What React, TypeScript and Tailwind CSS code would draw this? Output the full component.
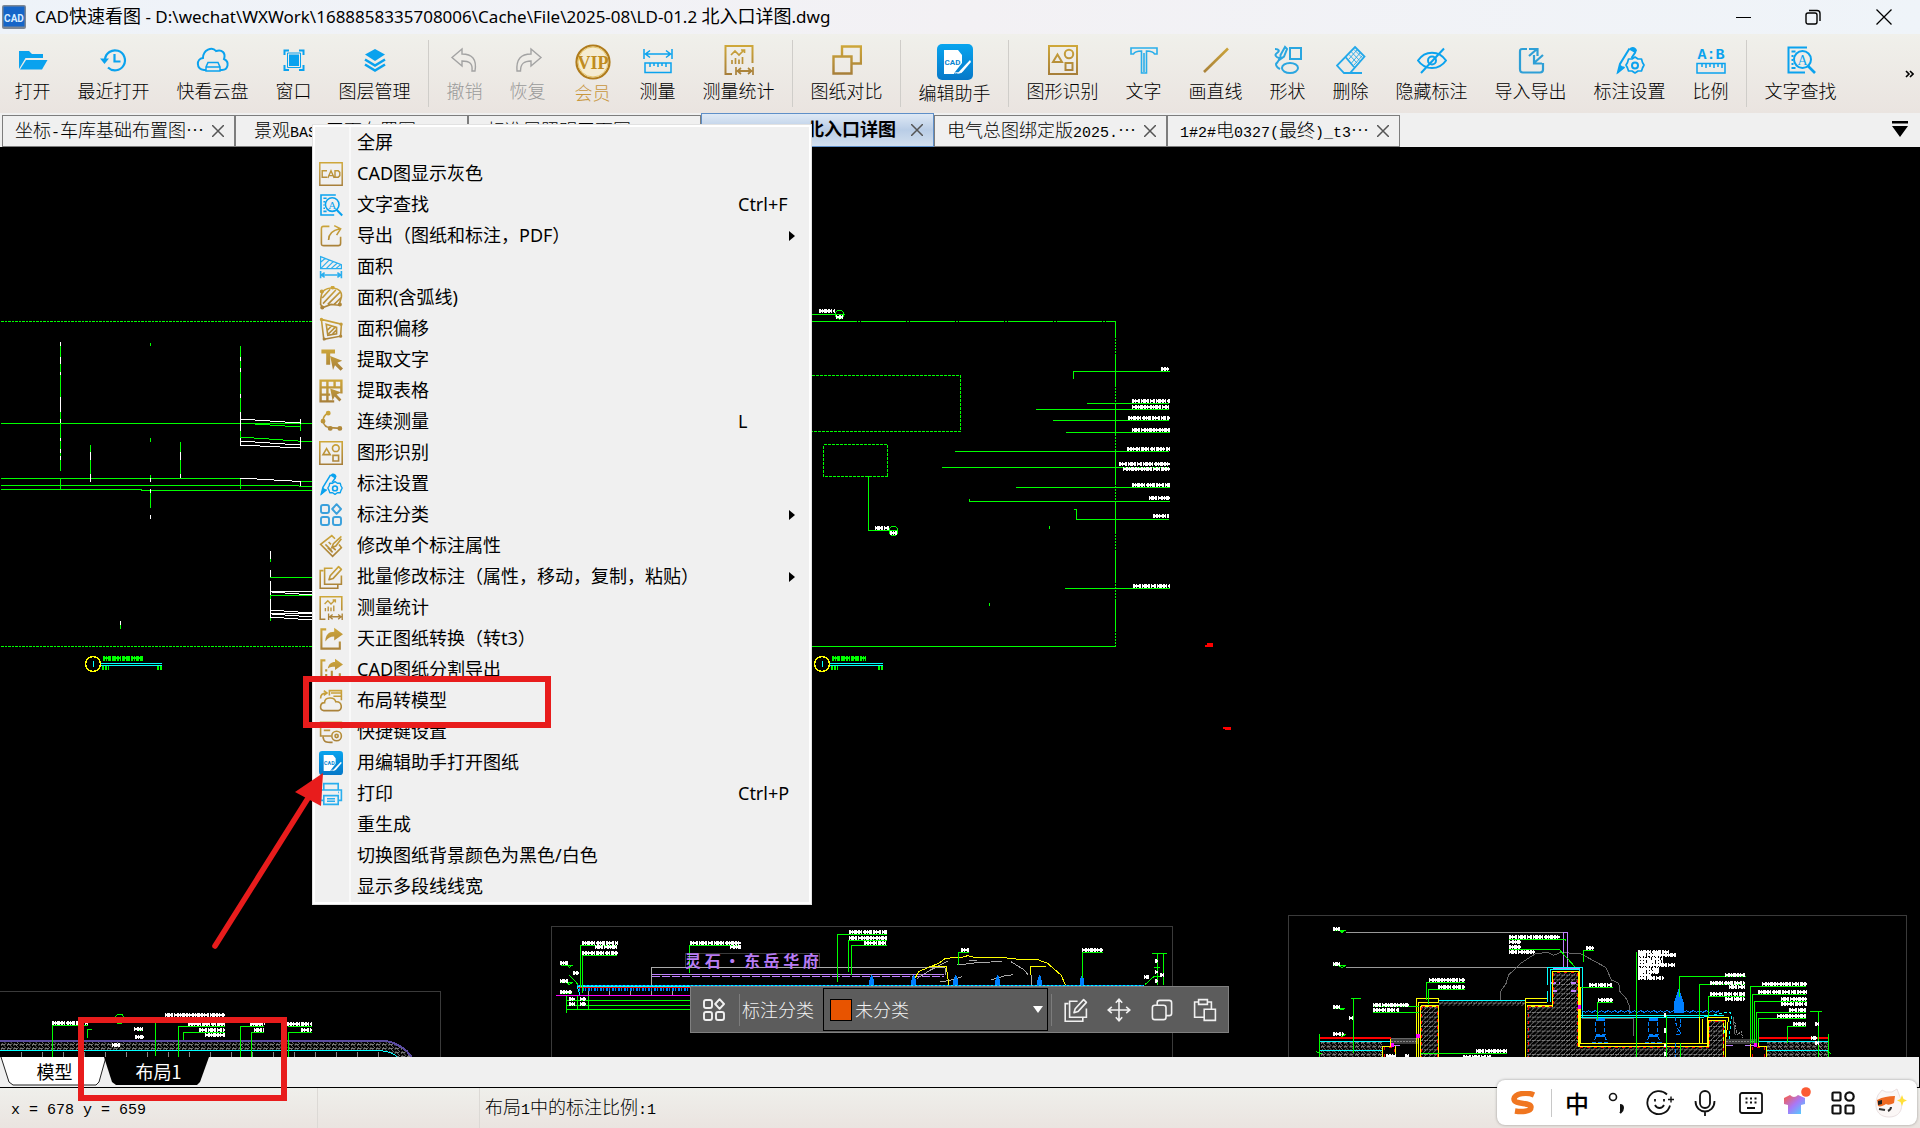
import React from "react";

const GOLD = "url(#gold)";
const BLUE = "#0aa2ee";
const GREEN = "#00ff00";

type IconProps = { size?: number; children?: React.ReactNode; color?: string; sw?: number };

function Ico({ size = 30, children, color = GOLD, sw = 2 }: IconProps) {
  return (
    <svg width={size} height={size} viewBox="0 0 30 30" fill="none" stroke={color} strokeWidth={sw} aria-hidden="true">
      {children}
    </svg>
  );
}

/* ---------- shared icons ---------- */

const FindText = ({ size }: { size?: number }) => (
  <Ico size={size} color={BLUE}>
    <path d="M21 2.500H2.500v25H19M5.500 6.500h4M5.500 11h2M5.500 15h1.500M5.500 19h2M5.500 23h4" />
    <circle cx="16.500" cy="14.500" r="8.500" />
    <path d="M22 21l7 7" strokeWidth={2.600} />
    <text x="16.500" y="19.500" textAnchor="middle" fontSize="14" fontFamily="Liberation Serif, serif" fill={BLUE} stroke="none">A</text>
  </Ico>
);
const Shapes = ({ size }: { size?: number }) => (
  <Ico size={size}>
    <path d="M1 1h28v28H1zM9.500 9.500l4.500 7.500H5z" />
    <circle cx="21" cy="9" r="4.200" />
    <path d="M17.500 18h7v7h-7z" />
  </Ico>
);
const Stats = ({ size }: { size?: number }) => (
  <Ico size={size}>
    <path d="M28.500 18V1h-27v28H8M13 26h15" />
    <path d="M7 10l4-4 4 4 5-5M17 5h3.500v3M8 19v-4M11.500 19v-6M15 19v-4.500M18.500 19v-7M12 22v8M29 22v8M17 23l-3.500 3 3.500 3M24 23l3.500 3-3.500 3" strokeWidth={1.700} />
  </Ico>
);
const PencilGear = ({ size }: { size?: number }) => (
  <Ico size={size} color={BLUE}>
    <path d="M14.500 3.500L5 19l-2 8 6.500-5M20.500 7l-4 6" />
    <path d="M14 4.500c2-4 7-3 8 1l-1.500 2.800zM4.500 19.500l5 3L2.500 29z" fill={BLUE} stroke="none" />
    <path d="M20 12l3 2h3.500l1 3.500 1.500 2.500-1.500 3-1 3H23l-3 2-3-2h-3.500l-1-3-1.500-3 1.500-2.500 1-3.500H17z" strokeWidth={1.700} strokeLinejoin="round" />
    <circle cx="20" cy="20.500" r="3" />
  </Ico>
);
const CadEdit = ({ size = 36 }: { size?: number }) => (
  <svg width={size} height={size} viewBox="0 0 36 36" aria-hidden="true">
    <rect width="36" height="36" rx="5" fill="url(#cadblue)" />
    <path d="M7 6h14l4 5v8l-7 9-1 2H7z" fill="#fff" />
    <text x="15.500" y="21" fontSize="8" fontWeight="700" textAnchor="middle" fill="#0a86d2" fontFamily="Roboto, sans-serif">CAD</text>
    <path d="M33 16l-9 9.500-4 4.500 5.500-2L34 18z" fill="#fff" />
    <path d="M18 29c3-1 4 1 7-1" stroke="#fff" fill="none" />
  </svg>
);
const Grid4 = ({ size, color = "#3aa0dc", sw = 2.400 }: { size?: number; color?: string; sw?: number }) => (
  <Ico size={size} color={color} sw={sw}>
    <rect x="2.500" y="2.500" width="10" height="10" rx="2.500" />
    <rect x="2.500" y="17.500" width="10" height="10" rx="2.500" />
    <rect x="17.500" y="17.500" width="10" height="10" rx="2.500" />
    <path d="M22 1.500l5.500 6-5.500 6-5.500-6z" strokeLinejoin="round" />
  </Ico>
);
const BatchEdit = ({ size, color }: { size?: number; color?: string }) => (
  <Ico size={size} color={color}>
    <path d="M5.500 7H1.500v22h22v-4M17 4H7v20h21V13" />
    <path d="M24.500 2l3.500 3.500L17.500 17l-5 1.500L14 13.500z" strokeLinejoin="round" />
  </Ico>
);

/* ---------- toolbar ---------- */

const icons = {
  open: (
    <Ico color="none">
      <path d="M1 24V6h10l3 3h11v4H7.500z" fill={BLUE} />
      <path d="M8 15h21.500L24 24.500H2z" fill={BLUE} />
    </Ico>
  ),
  recent: (
    <Ico color={BLUE} sw={2.200}>
      <path d="M6 14.500A10 10 0 1 1 9 22.500M15.500 9v7.500h6" />
      <path d="M1 13.500h9L5.500 19z" fill={BLUE} stroke="none" />
    </Ico>
  ),
  cloud: (
    <svg width="34" height="30" viewBox="0 0 34 30" fill="none" stroke={BLUE} strokeWidth="2" aria-hidden="true">
      <path d="M10 25H8C0 24 0 14 7 13 7 5 16 1 20 6c6-2 10 2 8 8 6 3 4 11-2 11h-2" />
      <path d="M12 17.500h10l2 4.500v4H10v-4zM10 22h14" strokeWidth="1.500" />
    </svg>
  ),
  window: (
    <Ico color={BLUE}>
      <path d="M11 10.500h8v9.500h-8z" fill={BLUE} />
      <path d="M8.500 8h13v14.500h-13z" strokeWidth={1} />
      <path d="M5.500 10V5.500H10M20 5.500h4.500V10M24.500 20v5H20M10 25H5.500v-5" />
    </Ico>
  ),
  layers: (
    <Ico color={BLUE} sw={2.600}>
      <path d="M15 4l10 5.500L15 16 5 9.500z" fill={BLUE} stroke="none" />
      <path d="M5 14.500l10 6 10-6M5 19.500l10 6 10-6" />
    </Ico>
  ),
  undo: (
    <Ico color="#a3a3a3" sw={1.400}>
      <path d="M2 12.500L12 4v5c10 0 15 5 13 17h-3c1-8-3-10-10-10v5z" />
    </Ico>
  ),
  redo: (
    <Ico color="#a3a3a3" sw={1.400}>
      <path d="M28 12.500L18 4v5C8 9 3 14 4 26h3.500c0-8 4-10 10.500-10v5z" />
    </Ico>
  ),
  vip: (
    <svg width="36" height="36" viewBox="0 0 36 36" aria-hidden="true">
      <circle cx="18" cy="18" r="16.500" fill="#f5ecd2" stroke="#b07c1c" strokeWidth="2.200" />
      <circle cx="18" cy="18" r="15" fill="none" stroke="#e6c56a" strokeWidth="1" />
      <text x="18" y="24.500" textAnchor="middle" fontSize="18" fontWeight="700" fontFamily="Liberation Serif, serif" fill="#c08c20">VIP</text>
    </svg>
  ),
  measure: (
    <Ico color={BLUE} sw={1.500}>
      <path d="M1 4v10M29 4v10M2 9h26M7 5.500L2.500 9 7 12.500M23 5.500L27.500 9 23 12.500M2 18h26v9.500H2zM7 18v4M11 18v3M15 18v4M19 18v3M23 18v4" />
    </Ico>
  ),
  stats: <Stats />,
  compare: (
    <Ico sw={2.400}>
      <path d="M10 11V1.500h19v17h-9M1.500 11.500h18v17h-18z" />
    </Ico>
  ),
  edit: <CadEdit />,
  shapesId: <Shapes />,
  text: (
    <Ico color="#2aaeea">
      <path d="M2 3h26v6h-2.500c-1-2.500-3-3-8-3v22h-5V6c-5 0-7 .5-8 3H2zM15 8v19" strokeWidth={1.600} />
    </Ico>
  ),
  line: (
    <Ico sw={2.600}>
      <path d="M3 27L27 3.500" />
    </Ico>
  ),
  shape: (
    <Ico color="#2aa6e0">
      <path d="M17 3h11v11H17z" />
      <ellipse cx="17" cy="23" rx="8" ry="5" />
      <path d="M12 2L7.500 10v4l3.500-2.500L14 4zM2 4c4 0 5 2 2 4-3 2-1 4 2 5 1 3-2 4-3 6 0 3 2 4 4 5" />
    </Ico>
  ),
  erase: (
    <Ico color="#22a8ea" sw={1.800}>
      <path d="M19 2l9.500 9.500L14 28H8l-7-7.500zM9.500 12L18 22M8 28h18" />
      <path d="M13 9.500l8 8.500M15.500 7l8 8.500M18 4.500l8 8M21 5l-8.500 9.500M24 8l-8.500 10M26 11l-8 9" strokeWidth={0.900} />
    </Ico>
  ),
  hide: (
    <Ico color={BLUE}>
      <path d="M1 15.500C8 5 22 5 29 15.500 22 25.500 8 25.500 1 15.500zM27 3.500L4 28" />
      <circle cx="15" cy="15.500" r="4" />
    </Ico>
  ),
  io: (
    <Ico color="#2e9fd6" sw={2.200}>
      <path d="M11 4H6.500C4 4 4 5 4 7v17c0 3 1 3.500 3 3.500h17c2 0 3-1 3-3V18M13 11l8-7M13 4h8.500v7M27 10l-9 8M18 10v8.500h8" />
    </Ico>
  ),
  markSet: <PencilGear />,
  ratio: (
    <Ico color={BLUE} sw={1.500}>
      <text x="15" y="13.500" textAnchor="middle" fontSize="15" fontWeight="700" fontFamily="Liberation Mono, monospace" fill={BLUE} stroke="none">A:B</text>
      <path d="M1 18.500h28V28H1zM6 19v3M10 19v4M14 19v3M18 19v4M22 19v3M26 19v4" />
    </Ico>
  ),
  find: <FindText />,
};

type Tool = { label: string; icon: React.ReactNode; w: string; tone?: string; big?: boolean };
const W2 = "w-[63px]";
const W3 = "w-[81px]";
const W4 = "w-[99px]";
const tools: (Tool | null)[] = [
  { label: "打开", icon: icons.open, w: W2 },
  { label: "最近打开", icon: icons.recent, w: W4 },
  { label: "快看云盘", icon: icons.cloud, w: W4 },
  { label: "窗口", icon: icons.window, w: W2 },
  { label: "图层管理", icon: icons.layers, w: W4 },
  null,
  { label: "撤销", icon: icons.undo, w: W2, tone: "text-[#9a9a9a]" },
  { label: "恢复", icon: icons.redo, w: W2, tone: "text-[#9a9a9a]" },
  { label: "会员", icon: icons.vip, w: "w-[67px]", tone: "text-[#c8963c]", big: true },
  { label: "测量", icon: icons.measure, w: W2 },
  { label: "测量统计", icon: icons.stats, w: W4 },
  null,
  { label: "图纸对比", icon: icons.compare, w: W4 },
  null,
  { label: "编辑助手", icon: icons.edit, w: W4, big: true },
  null,
  { label: "图形识别", icon: icons.shapesId, w: W4 },
  { label: "文字", icon: icons.text, w: W2 },
  { label: "画直线", icon: icons.line, w: W3 },
  { label: "形状", icon: icons.shape, w: W2 },
  { label: "删除", icon: icons.erase, w: W2 },
  { label: "隐藏标注", icon: icons.hide, w: W4 },
  { label: "导入导出", icon: icons.io, w: W4 },
  { label: "标注设置", icon: icons.markSet, w: W4 },
  { label: "比例", icon: icons.ratio, w: W2 },
  null,
  { label: "文字查找", icon: icons.find, w: W4 },
];

function Toolbar() {
  return (
    <div className="flex h-[79px] shrink-0 items-stretch bg-linear-to-b from-[#f0f0eb] to-[#eae4e0] pl-px font-light">
      {tools.map((t, i) =>
        t ? (
          <button key={i} className={`flex shrink-0 flex-col items-center text-lg leading-6 ${t.w} ${t.tone ?? "text-black"} ${t.big ? "pt-2.5" : "gap-[3px] pt-[11px]"}`}>
            {t.icon}
            <span className="whitespace-nowrap">{t.label}</span>
          </button>
        ) : (
          <div key={i} className="my-1.5 flex w-[9px] shrink-0 justify-center">
            <div className="w-px bg-[#cfcdc9]" />
          </div>
        )
      )}
      <button className="ml-auto self-center pr-1.5" aria-label="更多">
        <svg width="9" height="8" viewBox="0 0 9 8" fill="none" stroke="#000" strokeWidth="1.600" aria-hidden="true">
          <path d="M1 1l3 3-3 3M5 1l3 3-3 3" />
        </svg>
      </button>
    </div>
  );
}

/* ---------- document tabs ---------- */

const M = ({ children }: { children: React.ReactNode }) => <span className="font-['Liberation_Mono',monospace] text-[15px] font-normal">{children}</span>;

const docs: { key: string; text: React.ReactNode; active?: boolean; pad?: string }[] = [
  { key: "a", text: <>坐标<M>-</M>车库基础布置图…</> },
  { key: "b", text: <>景观<M>BASE</M>平面布置图…</>, pad: "pl-[18px]" },
  { key: "c", text: <>标准层照明平面图<M>(1)</M></>, pad: "pl-[18px]" },
  { key: "d", text: <><M>LD-01.2</M> 北入口详图</>, active: true },
  { key: "e", text: <>电气总图绑定版<M>2025.</M>…</> },
  { key: "f", text: <><M>1#2#</M>电<M>0327(</M>最终<M>)_t3</M>…</> },
];

function DocTabs() {
  return (
    <div className="flex h-[34px] shrink-0 items-end bg-[#f0f0f0] pl-0.5">
      {docs.map((d) => (
        <div
          key={d.key}
          className={
            d.active
              ? "flex h-[34px] w-[233px] items-center border border-[#5f8fc8] bg-linear-to-b from-[#dfe9f5] via-[#b9cde6] to-[#d3e0ef] pr-2.5"
              : "flex h-8 w-[233px] items-center border border-[#7d7d7d] bg-[#f0f0f0] pr-2.5"
          }
        >
          <button className={`min-w-0 flex-1 overflow-hidden text-lg leading-7 whitespace-nowrap text-black ${d.active ? "pr-[15px] text-right font-bold" : "text-left font-light"} ${d.pad ?? "pl-3"}`}>
            {d.text}
          </button>
          <button aria-label="关闭">
            <svg width="12" height="12" viewBox="0 0 12 12" stroke="#555" strokeWidth="1.500" aria-hidden="true">
              <path d="M0 0l12 12M12 0L0 12" />
            </svg>
          </button>
        </div>
      ))}
      <button className="mr-3 mb-[10px] ml-auto" aria-label="标签列表">
        <svg width="16" height="16" viewBox="0 0 16 16" aria-hidden="true">
          <path d="M0 0h16v2.500H0zM0 5h16l-8 11z" />
        </svg>
      </button>
    </div>
  );
}

/* ---------- context menu ---------- */

const menuItems: { label: string; icon?: React.ReactNode; key?: string; sub?: boolean }[] = [
  { label: "全屏" },
  {
    label: "CAD图显示灰色",
    icon: (
      <Ico size={24}>
        <path d="M1 1h28v28H1zM10 11H4v8h6M11 20l4-9 4 9M12.500 17h5M20 11h4l2 2v4l-2 2h-4z" strokeWidth={1.800} />
      </Ico>
    ),
  },
  { label: "文字查找", key: "Ctrl+F", icon: <FindText size={24} /> },
  {
    label: "导出（图纸和标注，PDF）",
    sub: true,
    icon: (
      <Ico size={24}>
        <path d="M13 3H6C3 3 3 4 3 7v17c0 3 1 3 3 3h18c2 0 3-1 3-3v-8M12 20c0-7 4-12 14-14M19 2l8 4-5 8" />
      </Ico>
    ),
  },
  {
    label: "面积",
    icon: (
      <Ico size={24} color="#2aaeee" sw={1.500}>
        <path d="M2 2l26 10v5H2zM2 9l6-5M3 16l10-10M9 17l9-9M15 17l8-7M21 17l6-5" />
        <path d="M2 20v9M28 20v9M3 25h24M7 22l-4 3 4 3M23 22l4 3-4 3" strokeWidth={2} />
      </Ico>
    ),
  },
  {
    label: "面积(含弧线)",
    icon: (
      <Ico size={24}>
        <path d="M4 8c6-8 26-8 24 6l-3 10-10-1-10 4-3-4c0-8 0-10 2-15zM4 15L14 4M5 22L21 5M11 23L26 8M19 23l9-9" />
        <path d="M4 27h.1M3.500 7h.1M17 2h.1M26 23h.1" strokeWidth={5} strokeLinecap="round" />
      </Ico>
    ),
  },
  {
    label: "面积偏移",
    icon: (
      <Ico size={24}>
        <path d="M3 3l25 6-1 15-21 4zM9 9l13 4v8l-11 2zM10 17l6-6M12 21l9-9M17 21l5-5" />
        <path d="M3 3h.1M27.500 9h.1M27 24h.1M6.500 27.500h.1" strokeWidth={4} strokeLinecap="round" />
      </Ico>
    ),
  },
  {
    label: "提取文字",
    icon: (
      <Ico size={24} color="none">
        <path d="M3 2h17v5h-6v14H9V7H3zM14 10l15 6-6 2.500 7 7-3 3-7-7-2.500 6z" fill={GOLD} />
      </Ico>
    ),
  },
  {
    label: "提取表格",
    icon: (
      <Ico size={24} sw={3}>
        <path d="M28 18V2H2v26h17M2 10.500h26M2 19.500h12M10.500 2v26M19.500 2v9" />
        <path d="M14 12l14 5-6 2.500 6 6-2.500 2.500-6-6-2.500 5z" fill={GOLD} stroke="none" />
      </Ico>
    ),
  },
  {
    label: "连续测量",
    key: "L",
    icon: (
      <Ico size={24}>
        <path d="M11 4c-4 2-6 5-6 10 1 5 4 8 9 8l13 1" />
        <path d="M11.500 4h.1M5 14h.1M14 23h.1M26 23h.1" strokeWidth={6} strokeLinecap="round" />
      </Ico>
    ),
  },
  { label: "图形识别", icon: <Shapes size={24} /> },
  { label: "标注设置", icon: <PencilGear size={24} /> },
  { label: "标注分类", sub: true, icon: <Grid4 size={24} /> },
  {
    label: "修改单个标注属性",
    icon: (
      <Ico size={24}>
        <path d="M20 6l-4-4L2 13l15 15 11-11-3-4M8 13l8 8M12 10l3 3M11 17l6 6M28 3L18 12l-2 5 5-2 7-9M17 17l4 3" />
      </Ico>
    ),
  },
  { label: "批量修改标注（属性，移动，复制，粘贴）", sub: true, icon: <BatchEdit size={24} /> },
  { label: "测量统计", icon: <Stats size={24} /> },
  {
    label: "天正图纸转换（转t3）",
    icon: (
      <Ico size={24} sw={2.600}>
        <path d="M9 3H3v24h23v-9" />
        <path d="M8 18c0-8 4-12 11-12V1l11 8-11 8v-5c-5 0-8 2-11 6z" fill={GOLD} stroke="none" />
      </Ico>
    ),
  },
  {
    label: "CAD图纸分割导出",
    icon: (
      <Ico size={24} sw={2.600}>
        <path d="M8 3H3v25h6M13 28h3M20 28h3M26 28v-9M9 14v3M9 20v4M16 16v8" />
        <path d="M11 13c1-5 4-8 9-8V1l10 7-10 7v-4c-4 0-6 0-9 2z" fill={GOLD} stroke="none" />
      </Ico>
    ),
  },
  {
    label: "布局转模型",
    icon: (
      <Ico size={24}>
        <path d="M6 27C0 26 1 17 7 17c0-7 12-8 14-1 8-1 9 10 3 11zM2 12c0-5 3-7 7-7M6 2l4 3-4 3M13 8V2h15v12M15 5h12M18 9h10" />
      </Ico>
    ),
  },
  {
    label: "快捷键设置",
    icon: (
      <Ico size={24}>
        <path d="M15 20H2V3h26v8M6 8h3M12 8h3M18 8h3M24 8h2M6 13h8M5 21c1 7 4 7 12 7" />
        <circle cx="22" cy="20" r="6" />
        <circle cx="22" cy="20" r="2" />
      </Ico>
    ),
  },
  { label: "用编辑助手打开图纸", icon: <CadEdit size={24} /> },
  {
    label: "打印",
    key: "Ctrl+P",
    icon: (
      <Ico size={24} color="#2aaeee">
        <path d="M6 10V2h18v8M6 23H2V10h26v13h-4M6 17h18v11H6zM10 21h10M10 24h10M24 13h1" />
      </Ico>
    ),
  },
  { label: "重生成" },
  { label: "切换图纸背景颜色为黑色/白色" },
  { label: "显示多段线线宽" },
];

function ContextMenu() {
  return (
    <div className="absolute top-[124px] left-[312px] w-[500px] border border-[#e2e2e2] bg-white p-0.5 font-['Noto_Sans','Noto_Sans_CJK_SC',sans-serif]">
      <ul role="menu" className="bg-[#f0f0f0]">
        {menuItems.map((m) => (
          <li key={m.label} role="none">
            <button role="menuitem" className="flex h-[31px] w-full items-center text-left text-lg leading-[31px] text-black">
              <span className="flex h-full w-9 shrink-0 items-center justify-center border-r-2 border-[#f9f9f9] pr-0.5">{m.icon}</span>
              <span className="flex-1 pl-1.5 whitespace-nowrap">{m.label}</span>
              {m.key && <span className="w-[71px]">{m.key}</span>}
              {m.sub && (
                <svg className="mr-3.5" width="6" height="10" viewBox="0 0 6 10" aria-hidden="true">
                  <path d="M0 0l6 5-6 5z" />
                </svg>
              )}
            </button>
          </li>
        ))}
      </ul>
    </div>
  );
}

/* ---------- drawing ---------- */

/** Annotation text too small to read at this zoom level. */
function Tiny({ at, c = "#fff" }: { at: number[][]; c?: string }) {
  return (
    <>
      {at.map(([x, y, w], i) => (
        <g key={i} stroke={c}>
          <path d={`M${x} ${y}h${w}`} strokeWidth={4} strokeDasharray="2 1 1 1 3 1 2 1 1 2" strokeDashoffset={i * 3} />
          <path d={`M${x} ${y}h${w}`} strokeWidth={2} strokeDasharray="7 1 5 1 9 2" strokeDashoffset={i * 5} />
        </g>
      ))}
    </>
  );
}

function Fountain({ x, y }: { x: number; y: number }) {
  return <path d={`M${x} ${y}v-14l3-12 2-6 3 6 2 12v14z`} fill="#0080ff" stroke="none" />;
}

function TitleMark({ x, n, w }: { x: number; n: number; w: number }) {
  return (
    <g>
      <circle cx={x} cy={664} r={7.500} stroke="#ffff00" strokeWidth={1.500} />
      <path d={`M${x} 661v6`} stroke="#00ffff" />
      <path d={`M${x + 8} 663.500h${w}M${x + 8} 665.500h${w}`} stroke="#00ffff" />
      <g stroke={GREEN}>
        <path d={`M${x + 10} 658h${n}`} strokeWidth={5} strokeDasharray="2 1 1 1 3 1 4 1" />
        <path d={`M${x + 10} 658h${n}`} strokeWidth={2} strokeDasharray="7 2 9 1" />
        <path d={`M${x + 9} 668h7M${x + 3 + w} 668h5`} strokeWidth={4} strokeDasharray="2 1" />
      </g>
    </g>
  );
}

function Drawing() {
  return (
    <svg className="absolute inset-0 h-full w-full" viewBox="0 147 1920 910" preserveAspectRatio="xMinYMin slice" fill="none" strokeWidth={1} shapeRendering="crispEdges" aria-label="图纸">
      <defs>
        <pattern id="hatch" width="12" height="14" patternUnits="userSpaceOnUse">
          <path d="M0 14L12 0M5 3l5-4M-2 6l4-6" stroke="#7c7c7c" strokeWidth="2.200" />
          <path d="M2 10h2M9 11h3" stroke="#666" strokeWidth="2" />
        </pattern>
        <pattern id="gravel" width="14" height="12" patternUnits="userSpaceOnUse">
          <path d="M0 3h4l3 4h4l3-4M3 12V8l4-1M10 0v4M7 12l4-4" stroke="#7a7a7a" strokeWidth="2" />
        </pattern>
      </defs>

      <g stroke={GREEN}>
        <path d="M1 321.500h311M1 646.500h311" strokeDasharray="3 1 2 1" />
        <path d="M60.500 342v129M150.500 343v3M150.500 438v4M1 423.500h311M240.500 346v99M255 424l45 3M300.500 419v12M240 437l72 5M90.500 445v37M180.500 442v36M1 478.500h239M300 481.500h12M1 485.500h284l27 1M1 489.500h140v1h171M60.500 478v11M240.500 478v11M150.500 475v6M150.500 489v19M270.500 551v11M270.500 570v7M270.500 581v40M270 577.500h42M270 595.500h42M120.500 621v8" />
      </g>
      <g stroke="#fff">
        <path d="M60.500 342v4M60.500 357v7M60.500 372v3M60.500 397v15M60.500 419v4M60.500 438v3M60.500 449v4M60.500 456v4M240.500 357v4M240.500 368v4M240.500 394v4M240.500 412v19M240.500 438v7M240 419l60 4M240 441l60 4M240 445l60 3M300.500 419v5M300.500 437v12M90.500 452v8M90.500 474v8M180.500 452v8M180.500 474v4M150.500 478v4M150.500 489v4M150.500 515v4M240 478l60 3.500v4M270.500 551v8M270.500 570v7M270.500 581v14M270.500 599v19M270 591.500h42M272 592l40 3M270 610l42 3M270 613.500h42M272 614l40 3M270 617l42 3M120.500 621v4" />
      </g>
      <TitleMark x={93} n={40} w={61} />
      <TitleMark x={822} n={34} w={53} />

      <g stroke={GREEN}>
        <path d="M812 314.500h33M812 646.500h304M868.500 476v54.500h29M1073.500 379v-7.500h96M1087 403.500h82M1036 409.500h133M1053 420.500h116M1066 432.500h104M955 451.500h214M942 467.500h227M1016 487.500h154M969.500 499v2.500h200M1074 509.500h2v10h93M1065 588.500h105M1049.500 526v3M989.500 603v3" />
        <path d="M812 321.500h303" strokeDasharray="45 1 2 1" />
        <path d="M1115.500 321v325" strokeDasharray="17 1 2 1 2 1 2 1 2 1 2 1 16 0" />
        <path d="M812 375.500h148.500v56H812M823.500 444.500h64v32h-64z" strokeDasharray="3 1" />
        <circle cx="839.500" cy="314.500" r="4.500" />
        <circle cx="893.500" cy="531" r="4.500" />
      </g>
      <Tiny
        at={[
          [819, 311, 16], [875, 528, 14], [1161, 369, 8], [1132, 401, 38], [1132, 407, 38], [1128, 418, 42], [1132, 430, 38],
          [1127, 449, 43], [1119, 464, 51], [1123, 469, 47], [1132, 485, 38], [1149, 498, 21], [1153, 516, 16], [1133, 586, 37], [836, 317, 7], [890, 533, 7],
        ]}
      />
      <path d="M1205 646h8M1207 644h6M1223 728h8M1225 729h6" stroke="#f00" strokeWidth="2" />

      {/* lower-left sheet */}
      <g transform="translate(0 970) scale(.4464 .3333)" className="[&_path]:[vector-effect:non-scaling-stroke]">
        <path d="M0 64h987v200" stroke="#3a3a3a" />
        <path d="M0 215h862l32 10 28 35h-34l-20-18H0z" fill="url(#gravel)" />
        <path d="M0 212h862q40 10 60 48" stroke="#5a4ba0" strokeWidth={2} />
        <path d="M0 241h850q30 5 40 20" stroke="#00ffff" />
        <path d="M48 245v15M95 245v15M142 245v15M189 245v15M236 245v15M283 245v15M330 245v15M377 245v15M424 245v15M471 245v15M518 245v15M565 245v15M612 245v15M659 245v15M706 245v15M753 245v15M800 245v15M847 245v15" stroke="#888" />
        <path d="M117 260V166h80M195 205v-27h10M348 258V142h157M400 260v-91h105M411 210v-23h94M539 260v-91h53M563 260v-73h29M646 260v-73h52M646 169h52M258 141l5-8h10l5 8-5 8h-10zM263 160h10M312 182h6M313 205h6" stroke={GREEN} />
        <Tiny at={[[117, 160, 80], [370, 135, 135], [422, 163, 83], [446, 180, 59], [460, 194, 45], [560, 162, 34], [570, 181, 22], [642, 162, 56], [674, 181, 24], [300, 176, 20], [302, 200, 20], [252, 224, 20]]} />
      </g>

      {/* centre sheet */}
      <g transform="translate(540 910) scale(.4464 .3333)" className="[&_path]:[vector-effect:non-scaling-stroke]">
        <path d="M25 442V49h1393v393M325 172v-42h300v42" stroke="#3a3a3a" />
        <path d="M250 226v-53h658M250 193h650M908 173v22M108 230v26M155 230v26M202 230v26M249 230v26M296 230v26M845 205l30-25 40-28M896 215l20-3 30-12M1010 210l30-12 20-4M960 152l20-2M1055 155l30 25 8 14M1101 195v30M935 165l50-8 50-2" stroke="#aaa" />
        <path d="M250 195h656M250 199h656" stroke="#c080ff" strokeDasharray="8 2" />
        <path d="M840 205l8-20 24-14 20-10 16-16 40-4 10-4 15 5h60l40 6h40l24 12 30 35 10 30M872 170h38l6 56M1099 195v-26h34" stroke="#ffff00" />
        <path d="M84 228h1270" stroke="#00ffff" strokeWidth={2} />
        <path d="M84 226h1270" stroke="#0080ff" strokeDasharray="2 2" />
        <path d="M84 232h252" stroke="#ff0000" />
        <path d="M88 238h248" stroke="#0080ff" strokeWidth={3} strokeDasharray="1 2 2 1" />
        <path d="M36 256h300" stroke="#ff00ff" strokeWidth={1} />
        <path d="M84 232l5 22" stroke="#00ffff" />
        {[738, 832, 926, 1020, 1114, 1209].map((x) => (
          <Fountain key={x} x={x} y={226} />
        ))}
        <path d="M91 230V106h82M95 250V136h78M335 190v-84h116M667 215V73h110M691 186V91h86M698 196v-90h79M938 165v-38h24M1215 205v-78h46M60 258v50M60 271h276M60 286h276M60 298h276M84 258v40M108 258v40M48 166h24l-6 6-6-6M48 218h24l-6 6-6-6M48 250h24M65 195l20 28M1370 130h34M1383 130v96M1397 130v96M1375 173h14M1375 200h14M1355 224l20-24" stroke={GREEN} />
        <Tiny at={[[94, 99, 80], [124, 112, 48], [94, 130, 80], [337, 100, 114], [426, 112, 25], [692, 67, 85], [692, 85, 85], [725, 100, 52], [944, 120, 18], [1215, 120, 46], [45, 160, 18], [45, 213, 18], [45, 245, 26], [66, 268, 12], [90, 268, 12], [66, 281, 12], [90, 281, 12], [75, 190, 12], [1378, 152, 6], [1378, 185, 6], [1390, 194, 8], [1353, 200, 12], [1378, 214, 6]]} />
      </g>
      <text x="685" y="966.500" fontSize="16" fontWeight="700" fontFamily="Noto Sans CJK SC, sans-serif" fill="#b87cf4">灵 石 · 东 岳 华 府</text>

      {/* right-hand sheet */}
      <g transform="translate(1280 900) scale(.4082 .3333)" className="[&_path]:[vector-effect:non-scaling-stroke]">
        <path d="M20 480V46h1515v440" stroke="#3a3a3a" />
        <path d="M345 320h42v152h-42zM606 320h62V218h64v222h320V364h36v108H606z" fill="url(#hatch)" />
        <path d="M390 303h212v16H390z" fill="url(#hatch)" />
        <path d="M98 426h152v24H98zM98 454h152v18H98zM1192 426h152v24h-152zM1192 454h152v18h-152z" fill="url(#gravel)" />
        <path d="M272 416h66v16h-66zM1092 416h76v16h-76z" fill="#3c3c3c" />
        <path d="M162 97h536M162 202h500" stroke="#999" />
        <path d="M540 300v-25l14-25 6-25 30-35 22-18 16-12 30-2 12 8 18-9 50 5 30 20 30 20 14 38 18 10 3 25 16 22 8 25v20M270 415h70M1110 350l5 55M740 355h125v52" stroke="#666" />
        <path d="M272 424h66M1092 424h76M1114 365l6 40 10-10 4 20" stroke="#888" strokeDasharray="2 1" />
        <path d="M694 202V97h11v105M668 205h66M275 438h20M1090 438h20M1140 438h20" stroke="#c080ff" />
        <path d="M664 249h22M712 249h22M666 274h18M714 274h18M668 208h64" stroke="#c080ff" strokeWidth={2} strokeDasharray="5 3" />
        <path d="M388 301h212M656 306v-34M656 254v-52h84v150M662 306v-98h72v140M738 347h350M738 352h300M97 424h172M97 451h152M1172 424h172M1192 451h152" stroke="#00ffff" />
        <path d="M1040 350l62-14 4 10-6 70M1092 360l-6 60" stroke="#00ffff" strokeDasharray="3 2" />
        <path d="M345 318h43v153M345 318v153M340 471V306M334 471V296h54v12h-48M601 471V296h54M606 318h62V214h64v226h316v-78h44v108M601 308h54M602 318v153M735 262v168h312v-78h52l-6 60M1034 430v-72M1028 352v78M251 471v-32h20v-22M283 471v-32M1191 471v-32h-20v-22M1153 471v-38" stroke="#ffff00" strokeWidth={1} />
        <path d="M345 318h43v153M606 318h62V214h64v226h316v-78h38v108" stroke="#ffff00" strokeWidth={1.500} />
        <path d="M347 321h39v150M347 321v150M608 321v150M608 321h62V218h60v225h322v-79h34v106M255 471v-28h26v28M1187 471v-28h-30v28" stroke="#f00" strokeDasharray="3 4" />
        <path d="M97 414h174M1170 414h174" stroke="#f00" strokeWidth={2} />
        <path d="M334 407h8M730 321h8M272 435h8M1160 435h8" stroke="#ff00ff" strokeWidth={4} />
        <path d="M740 332l8 5 8-5 8 5 8-5 8 5 8-5 8 5 8-5 8 5 8-5 8 5 8-5 8 5 8-5 8 5 8-5 8 5 8-5 8 5 8-5 8 5 8-5 8 5 8-5 8 5 8-5 8 5 8-5 8 5 8-5 8 5 8-5 8 5 8-5 8 5 8-5 8 5 8-5 8 5 8-5 8 5 8-5" stroke="#0080ff" />
        <path d="M773 365v34M796 365v34M773 403h24v12l6 12h-36l6-12zM903 365v34M926 365v34M903 403h24v12l6 12h-36l6-12zM970 350v20l6 20-4 15h10l-4-15 4-20v-20M968 430v40M980 430v40" stroke="#0080ff" strokeDasharray="4 2" />
        <path d="M773 354h24v10h-24zM903 354h24v10h-24zM773 404h24v8h-24zM903 404h24v8h-24zM965 338v-30l6-22 6-20 6 20 6 22v30z" fill="#0080ff" />
        <path d="M130 92h28l-6 5-6-5M130 198h28l-6 5-6-5M130 325h28l-6 5-6-5M130 405h28l-6 5-6-5M359 300v-53h94M364 312v-44h88M229 320h111M229 337h111M180 458V295M174 295h24M560 118h140v6M560 148h124l38 52M770 151h-26v34M738 262h78M778 360v-53h38M874 470V156M947 348v122M979 290v-60h162M1028 350v-97h112M1050 350v-61h90M1153 430V259h136M1158 430V283h130M1163 430V304h127M1167 430v-92h122M1171 430v-75h118M1243 428v-49h46M1298 334h30M1320 334v136M97 402v68M1344 402v68M345 460h211M88 455l14 6M1340 455l10 6M980 430v40" stroke={GREEN} />
        <Tiny
          at={[
            [130, 86, 18], [130, 192, 18], [130, 322, 18], [130, 401, 26], [365, 240, 88], [387, 262, 66], [229, 314, 86], [229, 331, 62], [560, 112, 126], [560, 125, 30], [560, 141, 30], [560, 155, 64],
            [750, 144, 20], [756, 256, 60], [780, 301, 36], [878, 156, 76], [878, 166, 92], [878, 176, 60], [878, 186, 60], [878, 196, 92], [878, 206, 50], [878, 216, 50], [878, 226, 30], [878, 235, 62],
            [1090, 224, 48], [1054, 248, 86], [1100, 261, 40], [1054, 283, 86], [1090, 297, 50], [1180, 252, 110], [1172, 276, 118], [1228, 298, 62], [1228, 311, 62], [1246, 331, 42], [1218, 349, 72], [1256, 373, 32],
            [480, 453, 76], [260, 467, 24], [306, 467, 10], [170, 354, 10], [1310, 373, 10], [1300, 415, 16], [1310, 428, 10], [448, 470, 70],
          ]}
        />
        <path d="M943 340v10M944 384v14M944 432v10M944 455v14" stroke="#fff" strokeWidth={2} />
      </g>
    </svg>
  );
}

/* ---------- floating annotation bar ---------- */

function AnnotationBar() {
  return (
    <div className="absolute top-[839px] left-[690px] flex h-[47px] w-[539px] items-center border border-[#808080] bg-[#5c5c5c] text-lg leading-6 font-light text-[#f2f2f2]">
      <button className="flex w-[46px] justify-center" aria-label="分类">
        <Grid4 size={24} color="#f0f0f0" />
      </button>
      <div className="mx-0.5 h-8 w-px bg-[#7c7c7c]" />
      <label htmlFor="category" className="w-[81px] pb-px whitespace-nowrap">标注分类</label>
      <div className="flex h-[43px] w-[225px] items-center border border-black pr-1 pl-1.5">
        <span className="size-[22px] shrink-0 border border-black bg-[#e85400]" />
        <select id="category" className="h-full min-w-0 flex-1 appearance-none bg-transparent pb-px pl-[3px]">
          <option>未分类</option>
        </select>
        <svg width="10" height="7" viewBox="0 0 10 7" aria-hidden="true">
          <path d="M0 0h10L5 7z" fill="#fff" />
        </svg>
      </div>
      <div className="mr-0.5 ml-[3px] h-8 w-px bg-[#7c7c7c]" />
      <button className="flex w-[43px] justify-center" aria-label="编辑"><BatchEdit size={24} color="#f0f0f0" /></button>
      <button className="flex w-[43px] justify-center" aria-label="移动">
        <Ico size={24} color="#f0f0f0">
          <path d="M15 2v26M2 15h26M11 6l4-4.500L19 6M11 24l4 4.500 4-4.500M6 11l-4.500 4L6 19M24 11l4.500 4-4.500 4" />
        </Ico>
      </button>
      <button className="flex w-[43px] justify-center" aria-label="复制">
        <Ico size={24} color="#f0f0f0">
          <rect x="3" y="9" width="17" height="18" rx="3" />
          <path d="M9 9V6q0-3 3-3h12q3 0 3 3v13q0 3-3 3h-4" />
        </Ico>
      </button>
      <button className="flex w-[43px] justify-center" aria-label="粘贴">
        <Ico size={24} color="#f0f0f0">
          <path d="M13 24H2V5h5M18 5h5v8M7 2h11v6H7zM14 14h14v14H14z" />
        </Ico>
      </button>
    </div>
  );
}

/* ---------- input-method bar ---------- */

function ImeBar() {
  const k = "#111";
  return (
    <div className="absolute right-[3px] bottom-[3px] flex h-[45px] w-[420px] items-center rounded-lg bg-white shadow-[0_0_3px_rgba(0,0,0,0.35)]">
      <button className="flex w-[54px] justify-center" aria-label="输入法">
        <svg width="28" height="24" viewBox="0 0 28 24" aria-hidden="true">
          <path d="M24 4C17 1 5 2 4 8c0 6 17 3 17 8 0 5-10 5-16 4" fill="none" stroke="#f07620" strokeWidth="5.500" />
        </svg>
      </button>
      <div className="h-7 w-px bg-[#c8c8c8]" />
      <button className="ml-[5px] flex w-10 justify-center font-['Noto_Sans_CJK_SC',sans-serif] text-2xl leading-8 font-medium text-black">中</button>
      <button className="flex w-10 justify-center" aria-label="标点">
        <svg width="18" height="24" viewBox="0 0 18 24" fill="none" stroke={k} aria-hidden="true">
          <circle cx="5" cy="6" r="3.500" strokeWidth="1.600" />
          <path d="M12 14a3 3 0 0 1 3 3c0 3-2 4-3 5" fill={k} strokeWidth="2" />
        </svg>
      </button>
      <button className="flex w-[45px] justify-center" aria-label="表情">
        <svg width="28" height="26" viewBox="0 0 28 26" fill="none" stroke={k} strokeWidth="1.800" aria-hidden="true">
          <path d="M21 4.500a11.500 11.500 0 1 0 3 11M9 15c2 4 7 4 9 0M9 9v2.500M18 9v2.500" />
          <path d="M25 6.500v6M22 9.500h6" strokeWidth="1.400" />
        </svg>
      </button>
      <button className="flex w-[46px] justify-center" aria-label="语音">
        <svg width="22" height="26" viewBox="0 0 22 26" fill="none" stroke={k} strokeWidth="1.800" aria-hidden="true">
          <rect x="6" y="1" width="10" height="17" rx="5" />
          <path d="M1.500 11c0 14 19 14 19 0M11 21v5" />
        </svg>
      </button>
      <button className="flex w-[46px] justify-center" aria-label="键盘">
        <svg width="24" height="24" viewBox="0 0 24 24" fill="none" stroke={k} strokeWidth="1.800" aria-hidden="true">
          <rect x="1" y="2" width="22" height="20" rx="2" />
          <path d="M6.500 7.500h2M11 7.500h2M15.500 7.500h2M6.500 11.500h2M11 11.500h2M15.500 11.500h2M8 17h8" />
        </svg>
      </button>
      <button className="flex w-[46px] justify-center" aria-label="皮肤">
        <svg width="28" height="32" viewBox="0 0 28 32" aria-hidden="true">
          <path d="M1 11l6-3q4 4 8 0l7 3v6l-4 1v9H5v-9l-4-1z" fill="url(#shirt)" />
          <circle cx="23" cy="5" r="4.800" fill="#fb5a34" />
        </svg>
      </button>
      <button className="flex w-[46px] justify-center" aria-label="工具箱">
        <svg width="24" height="24" viewBox="0 0 24 24" fill="none" stroke={k} strokeWidth="2.200" aria-hidden="true">
          <rect x="1.500" y="1.500" width="8" height="8" rx="1" />
          <circle cx="18.500" cy="5.500" r="4.200" />
          <rect x="1.500" y="14.500" width="8" height="8" rx="1" />
          <rect x="14.500" y="14.500" width="8" height="8" rx="1" />
        </svg>
      </button>
      <button className="flex w-12 justify-center" aria-label="助手">
        <svg width="34" height="32" viewBox="0 0 34 32" aria-hidden="true">
          <path d="M5 8l4-5 4 2h6l5-3 3 8c4 10 1 20-11 20S0 20 5 8z" fill="#fbf7f6" stroke="#eadfe0" />
          <path d="M4 13c6-3 11-4 18-4l-1 7c-4 2-6 2-8 1-3 2-6 3-8 2z" fill="#ef6a22" />
          <path d="M5 14l4-1v4l-4 1z" fill="#222" />
          <path d="M6 22l6 1M15 24c2-1 3-3 3-4" stroke="#333" strokeWidth="2" fill="none" />
          <path d="M29 8l1.500 4 3.500 1.500-3.500 1.500-1.500 4-1.500-4-3.500-1.500 3.500-1.500z" fill="#ffe03a" />
        </svg>
      </button>
    </div>
  );
}

/* ---------- red callouts ---------- */

function Callouts() {
  return (
    <div className="pointer-events-none absolute inset-0">
      <div className="absolute top-[676px] left-[303px] h-[52px] w-[248px] border-[6px] border-[#e81c1c]" />
      <div className="absolute bottom-[27px] left-[78px] h-[84px] w-[209px] border-[6px] border-[#e81c1c]" />
      <svg className="absolute top-[770px] left-[205px]" width="125" height="185" viewBox="205 770 125 185" aria-hidden="true">
        <path d="M215 946L310 795" stroke="#e81c1c" strokeWidth="5.500" strokeLinecap="round" />
        <path d="M323 773l-28 19 26 14z" fill="#e81c1c" />
      </svg>
    </div>
  );
}

function LayoutTabs() {
  return (
    <div className="flex h-[31px] shrink-0 border-r border-b border-black bg-[#f0f0f0] text-lg leading-7 font-normal" role="tablist">
      <button role="tab" className="relative w-[107px] pb-0.5 pl-0.5">
        <svg className="absolute inset-0" width="107" height="30" viewBox="0 0 107 30" aria-hidden="true">
          <path d="M1 0l8 25 4 3h83l3-3 7-25" fill="#fff" stroke="#222" />
        </svg>
        <span className="relative">模型</span>
      </button>
      <button role="tab" aria-selected="true" className="relative -ml-1 w-[107px] pb-0.5 pl-1 text-white">
        <svg className="absolute inset-0" width="107" height="30" viewBox="0 0 107 30" aria-hidden="true">
          <path d="M1 0l8 25 4 3h81l3-3 9-25z" fill="#000" />
        </svg>
        <span className="relative">布局1</span>
      </button>
    </div>
  );
}

const Han = ({ children }: { children: React.ReactNode }) => <span className="text-lg leading-none">{children}</span>;

export default function App() {
  return (
    <div lang="zh-CN" className="relative flex h-screen flex-col overflow-hidden bg-black font-['Noto_Sans_CJK_SC',sans-serif]">
      <svg width="0" height="0" className="absolute" aria-hidden="true">
        <defs>
          <linearGradient id="gold" gradientUnits="userSpaceOnUse" x1="0" y1="0" x2="0" y2="30">
            <stop offset="0" stopColor="#cfa83a" />
            <stop offset="1" stopColor="#a67e3a" />
          </linearGradient>
          <linearGradient id="cadblue" x1="0" y1="0" x2="0" y2="1">
            <stop offset="0" stopColor="#08a4ee" />
            <stop offset="1" stopColor="#0678c8" />
          </linearGradient>
          <linearGradient id="shirt" x1="0" y1="0" x2="1" y2="1">
            <stop offset="0" stopColor="#ff5a3c" />
            <stop offset="0.500" stopColor="#a878f8" />
            <stop offset="1" stopColor="#40e0ff" />
          </linearGradient>
        </defs>
      </svg>

      <header className="flex h-[34px] shrink-0 items-center bg-linear-to-r from-[#eef3f9] via-[#f3f1f4] to-[#eff4f9] pl-0.5">
        <svg width="24" height="24" viewBox="0 0 24 24" aria-hidden="true">
          <rect width="24" height="24" rx="2" fill="#7c8794" />
          <rect x="1.500" y="1.500" width="21" height="20" fill="#1565c8" />
          <text x="12" y="17" textAnchor="middle" fontSize="10" fontWeight="700" fontFamily="Roboto, sans-serif" fill="#d8ecff">CAD</text>
        </svg>
        <h1 className="ml-[9px] font-['Noto_Sans','Noto_Sans_CJK_SC',sans-serif] text-[17px] leading-[34px] whitespace-nowrap text-black">
          CAD<Han>快速看图</Han> - D:\wechat\WXWork\1688858335708006\Cache\File\2025-08\LD-01.2 <Han>北入口详图</Han>.dwg
        </h1>
        <div className="ml-auto flex h-full">
          <button className="flex w-[69px] items-center justify-center" aria-label="最小化">
            <svg width="15" height="15" viewBox="0 0 15 15" stroke="#000" aria-hidden="true"><path d="M0 7.500h15" /></svg>
          </button>
          <button className="flex w-[69px] items-center justify-center" aria-label="还原">
            <svg width="16" height="16" viewBox="0 0 16 16" fill="none" stroke="#000" strokeWidth="1.400" aria-hidden="true">
              <rect x="1" y="4" width="11" height="11" rx="2" />
              <path d="M4 1.500h8q3 0 3 3V12" />
            </svg>
          </button>
          <button className="flex w-[73px] items-center justify-center" aria-label="关闭窗口">
            <svg width="16" height="16" viewBox="0 0 16 16" stroke="#000" strokeWidth="1.300" aria-hidden="true"><path d="M.5.5l15 15M15.500.5l-15 15" /></svg>
          </button>
        </div>
      </header>
      <Toolbar />
      <DocTabs />

      <main className="relative min-h-0 flex-1 overflow-hidden bg-black">
        <Drawing />
        <AnnotationBar />
      </main>

      <LayoutTabs />
      <footer className="flex h-10 shrink-0 bg-linear-to-b from-[#efefeb] to-[#eae4e0] text-lg leading-9 font-light text-black">
        <div className="w-[318px] border-r border-[#dcd9d5] pl-[11px] whitespace-pre"><M>x = 678 y = 659</M></div>
        <div className="w-[162px] border-r border-[#dcd9d5]" />
        <div className="pl-[5px]">布局<M>1</M>中的标注比例<M>:1</M></div>
      </footer>

      <ContextMenu />
      <Callouts />
      <ImeBar />
    </div>
  );
}
